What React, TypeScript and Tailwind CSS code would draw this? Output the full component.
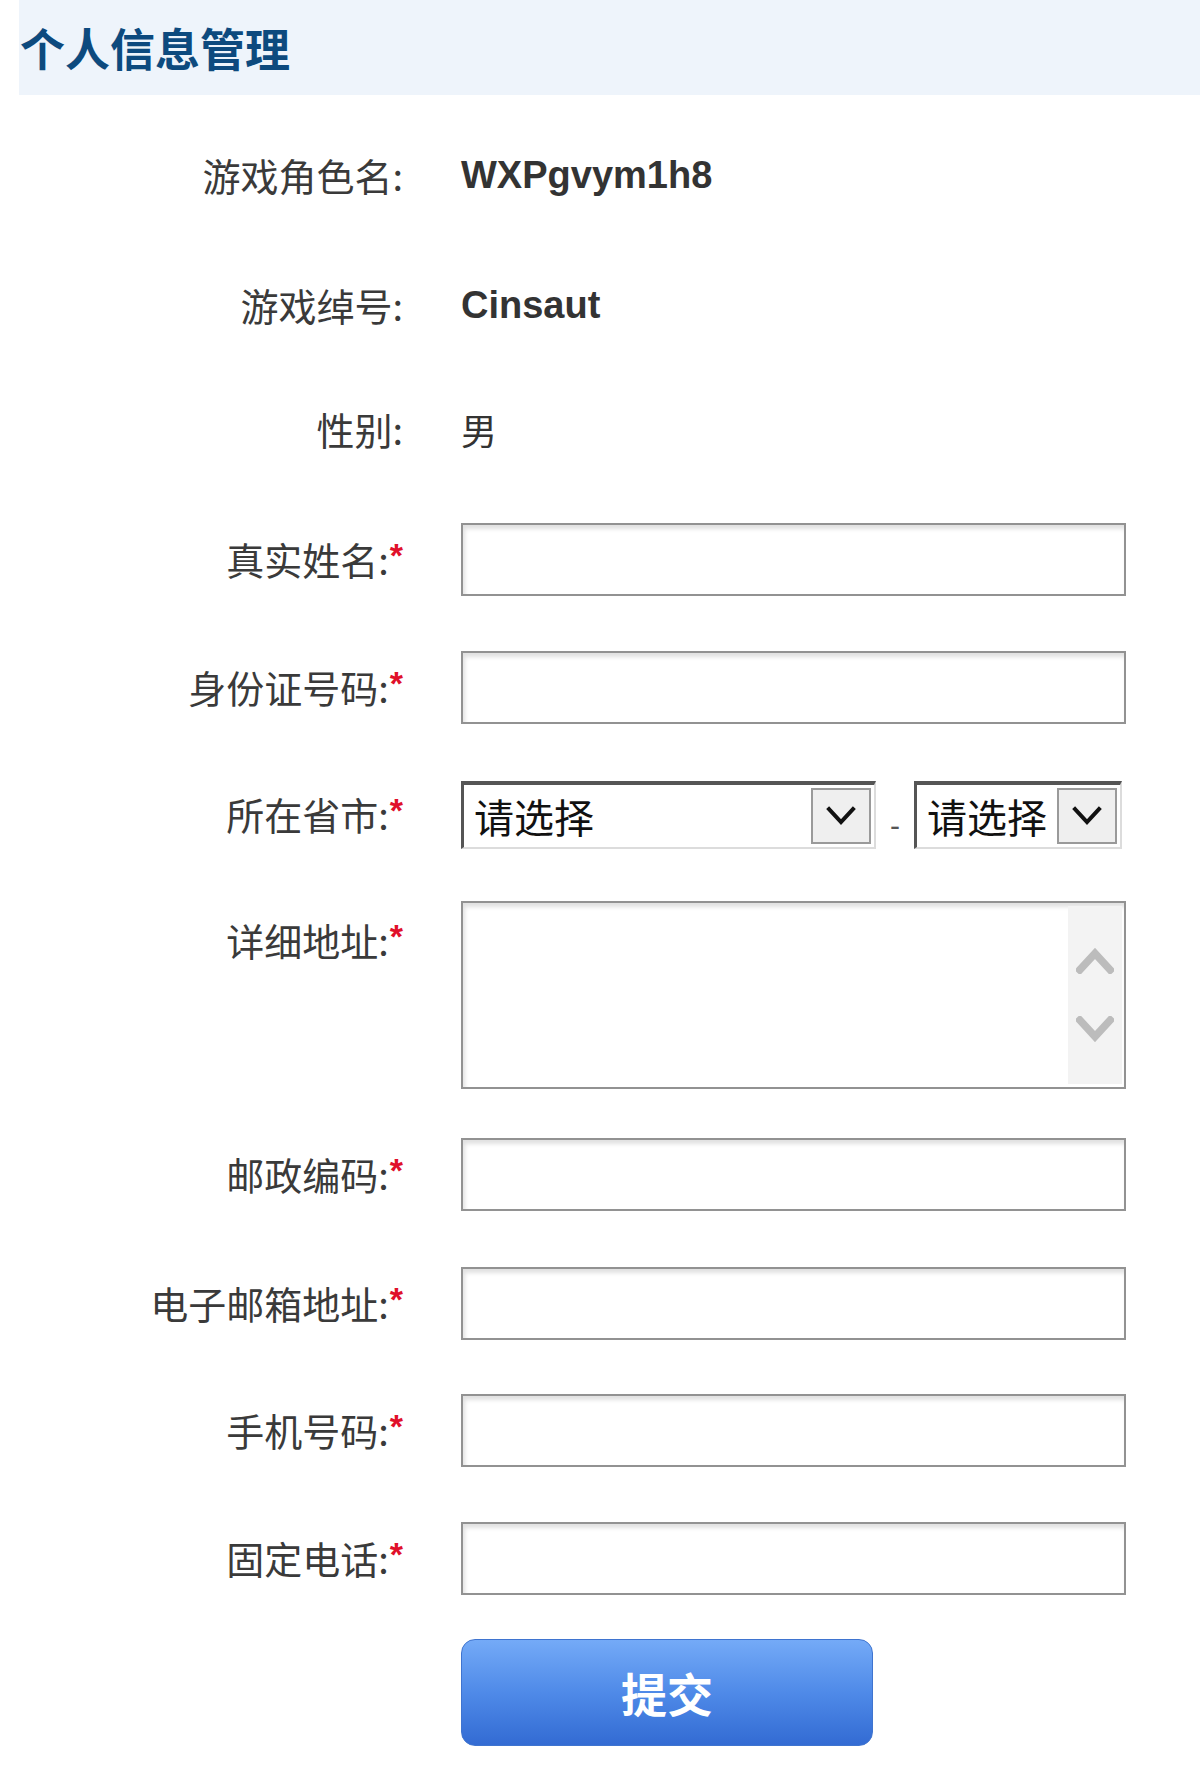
import React from "react";

const cjk = "font-['Noto_Sans_CJK_SC',_'Noto_Sans',_sans-serif]";

const Label = ({ text, required = false, top = false }: { text: string; required?: boolean; top?: boolean }) => (
  <div
    className={`w-[403px] shrink-0 text-right text-[38px] leading-none text-[#3a3a3a] ${cjk} ${top ? "self-start pt-[20px]" : ""}`}
  >
    {text}:
    {required && (
      <span className="relative -top-[8px] ml-[1px] text-[34px] font-bold text-[#e0102a] font-['Liberation_Sans',_sans-serif]">
        *
      </span>
    )}
  </div>
);

const TextInput = () => (
  <div className="h-[73px] w-[665px] border-2 border-[#929292] bg-white shadow-[inset_2px_4px_4px_rgba(0,0,0,0.12)]" />
);

const Chevron = ({ up = false, color = "#111", stroke = 4, w = 30, h = 20 }: { up?: boolean; color?: string; stroke?: number; w?: number; h?: number }) => (
  <svg width={w} height={h} viewBox="0 0 30 20" fill="none">
    <path
      d={up ? "M3 17 L15 4 L27 17" : "M3 3 L15 16 L27 3"}
      stroke={color}
      strokeWidth={stroke}
      strokeLinecap="square"
    />
  </svg>
);

const Select = ({ width }: { width: string }) => (
  <div
    className={`${width} flex h-[68px] items-center border-t-[4px] border-l-[3px] border-r-2 border-b-2 border-t-[#555] border-l-[#555] border-r-[#dcdcdc] border-b-[#dcdcdc] bg-white pl-[10px] pr-[3px]`}
  >
    <span className={`flex-1 text-[40px] leading-none text-[#111] ${cjk}`}>请选择</span>
    <div className="flex h-[56px] w-[60px] items-center justify-center border-2 border-[#9a9a9a] bg-[#efefef]">
      <Chevron />
    </div>
  </div>
);

const Row = ({ mt, children, h = "h-[73px]" }: { mt: string; children: React.ReactNode; h?: string }) => (
  <div className={`flex items-center gap-[58px] ${mt} ${h}`}>{children}</div>
);

export default function App() {
  const value = "text-[38px] font-bold leading-none text-[#333] font-['Liberation_Sans',_Arial,_sans-serif]";
  return (
    <div className="min-h-[1770px] w-[1200px] bg-white pb-[24px]">
      <div className="ml-[19px] flex h-[95px] items-center bg-[#eef4fb] pl-[1px]">
        <h1 className={`text-[45px] font-bold leading-none text-[#0d4a7e] ${cjk}`}>个人信息管理</h1>
      </div>

      <Row mt="mt-[43px]">
        <Label text="游戏角色名" />
        <span className={value}>WXPgvym1h8</span>
      </Row>
      <Row mt="mt-[57px]">
        <Label text="游戏绰号" />
        <span className={value}>Cinsaut</span>
      </Row>
      <Row mt="mt-[51px]">
        <Label text="性别" />
        <span className={`text-[36px] leading-none text-[#333] ${cjk}`}>男</span>
      </Row>
      <Row mt="mt-[58px]">
        <Label text="真实姓名" required />
        <TextInput />
      </Row>
      <Row mt="mt-[55px]">
        <Label text="身份证号码" required />
        <TextInput />
      </Row>
      <Row mt="mt-[57px]" h="h-[68px]">
        <Label text="所在省市" required />
        <div className="flex items-center">
          <Select width="w-[415px]" />
          <span className="mx-[14px] mt-[22px] text-[30px] leading-none text-[#555] font-['Liberation_Sans',_sans-serif]">-</span>
          <Select width="w-[208px]" />
        </div>
      </Row>
      <Row mt="mt-[52px]" h="h-[188px]">
        <Label text="详细地址" required top />
        <div className="flex h-[188px] w-[665px] self-start border-2 border-[#929292] bg-white shadow-[inset_2px_4px_4px_rgba(0,0,0,0.12)]">
          <div className="flex-1" />
          <div className="my-[3px] mr-[2px] flex w-[54px] flex-col items-center justify-center gap-[42px] bg-[#f3f3f3]">
            <Chevron up color="#bcbcbc" stroke={6} w={38} h={26} />
            <Chevron color="#bcbcbc" stroke={6} w={38} h={26} />
          </div>
        </div>
      </Row>
      <Row mt="mt-[49px]">
        <Label text="邮政编码" required />
        <TextInput />
      </Row>
      <Row mt="mt-[56px]">
        <Label text="电子邮箱地址" required />
        <TextInput />
      </Row>
      <Row mt="mt-[54px]">
        <Label text="手机号码" required />
        <TextInput />
      </Row>
      <Row mt="mt-[55px]">
        <Label text="固定电话" required />
        <TextInput />
      </Row>

      <div className="ml-[461px] mt-[44px]">
        <button
          className={`h-[107px] w-[412px] rounded-[14px] border border-[#3f74cf] bg-gradient-to-b from-[#74aaf7] via-[#4f8ae8] to-[#336bd3] text-[46px] font-bold text-white ${cjk}`}
        >
          提交
        </button>
      </div>
    </div>
  );
}
